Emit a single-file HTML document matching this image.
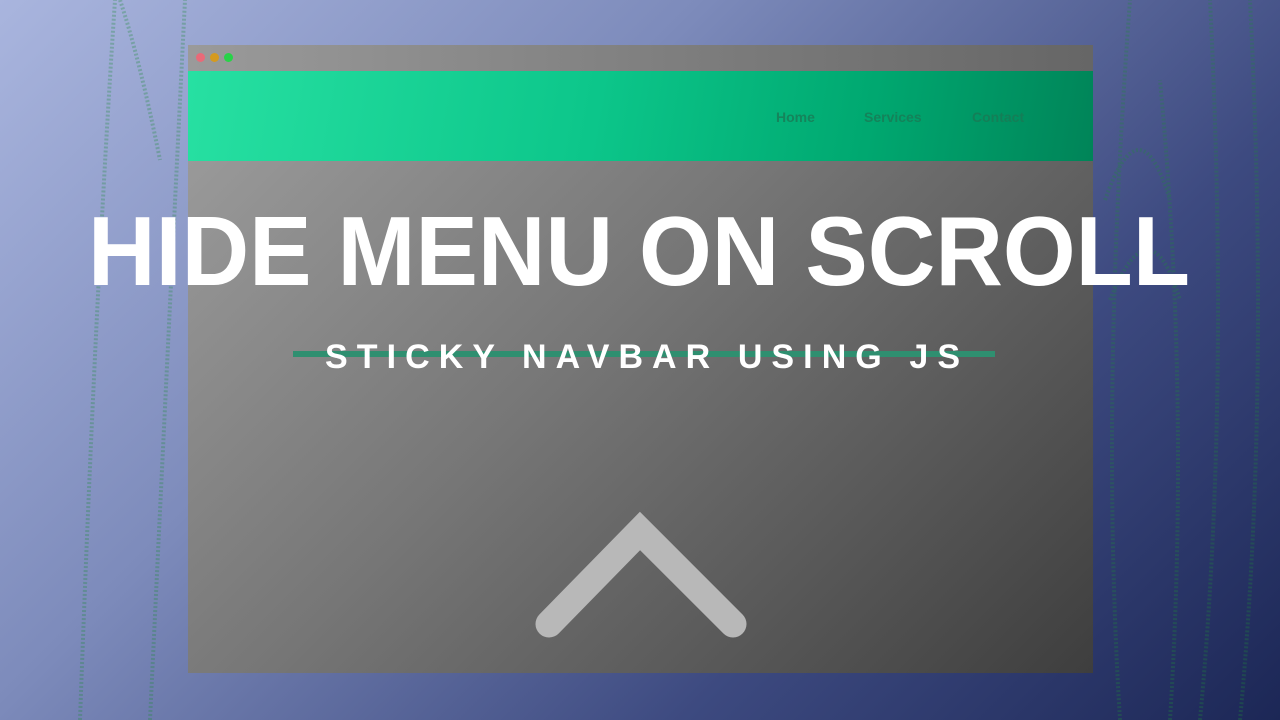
<!DOCTYPE html>
<html><head><meta charset="utf-8"><style>
html,body{margin:0;padding:0;width:1280px;height:720px;overflow:hidden}
body{background:linear-gradient(135deg,#a9b5de 0%,#7d8bbb 35%,#3d4a80 70%,#1c2756 100%);position:relative;font-family:"Liberation Sans",sans-serif}
.win{position:absolute;left:188px;top:45px;width:905px;height:628px;background:linear-gradient(135deg,#a0a0a0 0%,#777 45%,#3e3e3e 100%)}
.tb{position:absolute;left:0;top:0;width:905px;height:26px;background:linear-gradient(90deg,#9a9a9a,#666)}
.dot{position:absolute;top:8px;width:9px;height:9px;border-radius:50%}
.nav{position:absolute;left:0;top:26px;width:905px;height:90px;background:linear-gradient(100deg,#27e0a2 0%,#0cc68a 45%,#00a870 75%,#008458 100%)}
.nav span{position:absolute;top:38px;font-size:14px;font-weight:bold;color:#1a7a55;opacity:.8}
svg{position:absolute;left:0;top:0}
</style></head><body>
<svg width="1280" height="720" style="opacity:.3">
<g fill="none" stroke="#1f8a3a" stroke-width="4" stroke-dasharray="2 2">
<path d="M80 720 Q95 300 115 0 M150 720 Q170 300 185 0 M120 0 Q140 60 160 160"/>
<path d="M1120 720 Q1100 400 1130 0 M1170 720 Q1190 400 1160 80 M1200 720 Q1230 400 1210 0 M1240 720 Q1270 400 1250 0"/>
<path d="M1105 200 Q1140 100 1170 200 M1110 300 Q1150 200 1180 300"/>
</g></svg>
<div class="win">
<div class="tb">
<div class="dot" style="left:8px;background:#e96a78"></div>
<div class="dot" style="left:22px;background:#d59a1e"></div>
<div class="dot" style="left:36px;background:#28d348"></div>
</div>
<div class="nav"><span style="left:588px">Home</span><span style="left:676px">Services</span><span style="left:784px">Contact</span></div>
</div>
<svg width="1280" height="720">
<rect x="293" y="351" width="702" height="6" fill="#2f8f70"/>
<text x="88" y="285" textLength="1102" lengthAdjust="spacingAndGlyphs" font-family="Liberation Sans, sans-serif" font-weight="bold" font-size="98" fill="#fff">HIDE MENU ON SCROLL</text>
<text x="325" y="368" textLength="635" lengthAdjust="spacing" font-family="Liberation Sans, sans-serif" font-weight="bold" font-size="34" fill="#fff">STICKY NAVBAR USING JS</text>
<polyline points="549,624 640,531 733,624" fill="none" stroke="#b8b8b8" stroke-width="27" stroke-linejoin="miter" stroke-linecap="round"/>
</svg>
</body></html>
